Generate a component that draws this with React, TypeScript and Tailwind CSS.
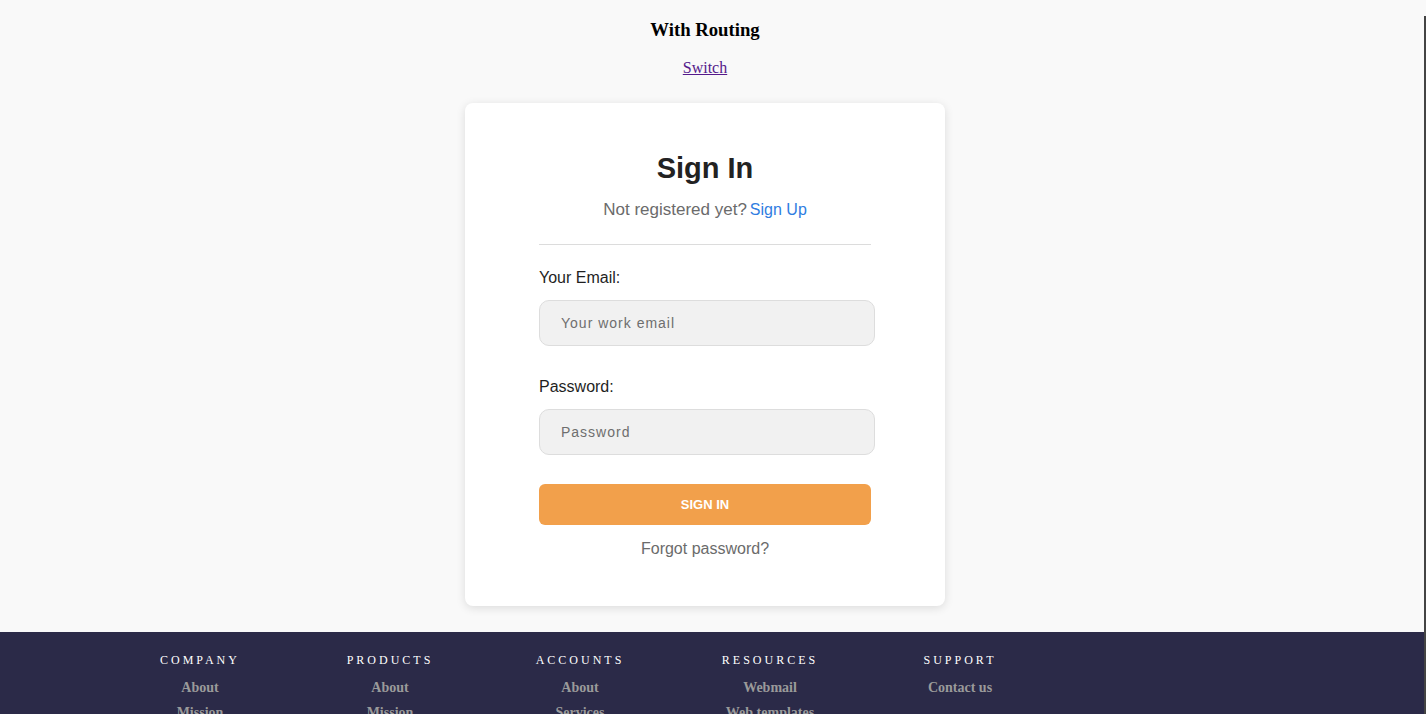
import React from "react";

const serif = { fontFamily: '"Liberation Serif", "Times New Roman", serif' };
const sans = { fontFamily: '"Liberation Sans", Arial, Helvetica, sans-serif' };

const cols: { title: string; links: string[] }[] = [
  { title: "COMPANY", links: ["About", "Mission"] },
  { title: "PRODUCTS", links: ["About", "Mission"] },
  { title: "ACCOUNTS", links: ["About", "Services"] },
  { title: "RESOURCES", links: ["Webmail", "Web templates"] },
  { title: "SUPPORT", links: ["Contact us"] },
];

export default function App() {
  return (
    <div className="relative h-[714px] w-[1426px] overflow-hidden bg-[#f9f9f9]" style={serif}>
      <div className="flex w-[1410px] flex-col items-center">
        <h3 className="pt-[19px] text-[18.72px] font-bold leading-[22px] text-black">With Routing</h3>
        <a href="#" className="mt-[18px] text-[16px] leading-[18px] text-[#551a8b] underline">
          Switch
        </a>
        <div
          className="mt-[26px] flex w-[480px] flex-col rounded-[8px] bg-white px-[74px] pb-[47px] pt-[49px] shadow-[0_2px_10px_rgba(0,0,0,0.12)]"
          style={sans}
        >
          <h2 className="text-center text-[29px] font-bold leading-[32px] text-[#222]">Sign In</h2>
          <p className="mt-[16px] flex h-[20px] items-center justify-center gap-[3px] leading-[20px] text-[#6b6b6b]">
            <span className="text-[17px]">Not registered yet?</span>
            <a href="#" className="text-[16px] text-[#2f7de1]">Sign Up</a>
          </p>
          <div className="mt-[24px] h-px w-full bg-[#dcdcdc]" />
          <label className="mt-[23px] text-[16px] leading-[20px] text-[#1f1f1f]">Your Email:</label>
          <div className="mt-[12px] flex h-[46px] w-[336px] items-center rounded-[10px] border border-[#dddddd] bg-[#f1f1f1] pl-[21px] text-[14px] tracking-[1px] text-[#6e6e6e]">
            Your work email
          </div>
          <label className="mt-[31px] text-[16px] leading-[20px] text-[#1f1f1f]">Password:</label>
          <div className="mt-[12px] flex h-[46px] w-[336px] items-center rounded-[10px] border border-[#dddddd] bg-[#f1f1f1] pl-[21px] text-[14px] tracking-[1px] text-[#6e6e6e]">
            Password
          </div>
          <button className="mt-[29px] flex h-[41px] w-full items-center justify-center rounded-[6px] bg-[#f2a04b] text-[13px] font-bold text-white">
            SIGN IN
          </button>
          <p className="mt-[14px] text-center text-[16px] leading-[20px] text-[#6b6b6b]">Forgot password?</p>
        </div>
      </div>
      <footer className="mt-[26px] w-[1424px] bg-[#2b2a48] pb-10 pl-[105px] pt-[20px]">
        <div className="grid w-[950px] grid-cols-5">
          {cols.map((c) => (
            <div key={c.title} className="flex flex-col items-center">
              <div className="text-[12px] leading-[16px] tracking-[3px] text-white">{c.title}</div>
              <div className="mt-[7px] flex flex-col items-center">
                {c.links.map((l) => (
                  <a key={l} href="#" className="text-[14px] font-bold leading-[25px] text-[#9a9a9a]">
                    {l}
                  </a>
                ))}
              </div>
            </div>
          ))}
        </div>
      </footer>
      <div className="absolute bottom-0 right-0 top-[16px] w-[2px] bg-[#444]" />
    </div>
  );
}
